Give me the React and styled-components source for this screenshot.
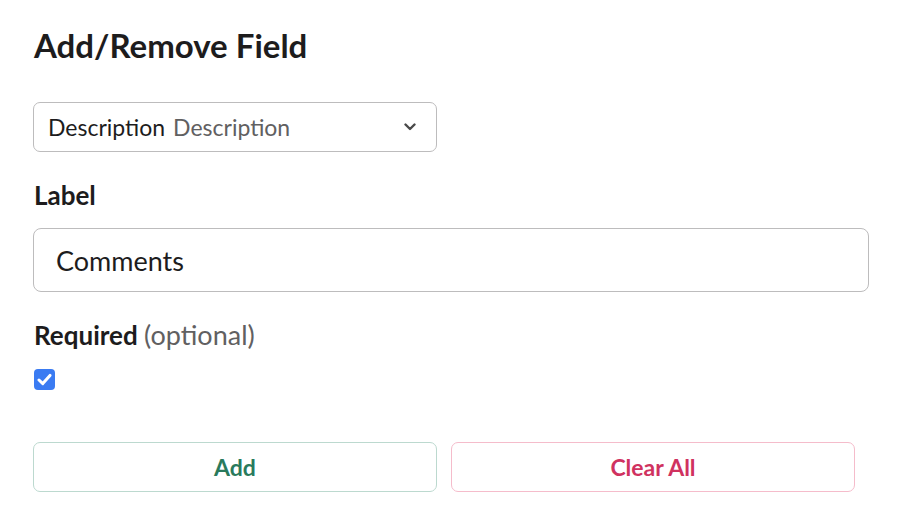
import React from "react";
import styled, { createGlobalStyle } from "styled-components";

const Global = createGlobalStyle`
  html, body { margin: 0; padding: 0; background: #ffffff; }
  body { font-family: Lato, "Noto Sans", sans-serif; color: #1d1c1d; -webkit-font-smoothing: antialiased; }
`;

const Page = styled.div`
  display: flex;
  flex-direction: column;
  align-items: flex-start;
  padding: 24px 33px 0 33px;
  width: 836px;
`;

const Title = styled.h1`
  margin: 0 0 36px 1px;
  font-size: 33px;
  line-height: 42px;
  font-weight: 700;
  color: #1d1c1d;
`;

const Select = styled.div`
  box-sizing: border-box;
  width: 404px;
  height: 50px;
  border: 1px solid #bdbcbd;
  border-radius: 7px;
  display: flex;
  align-items: center;
  padding: 0 20px 0 14px;
  font-size: 23px;
`;

const SelectMain = styled.span`
  color: #1d1c1d;
`;

const SelectHint = styled.span`
  color: #616061;
  margin-left: 8px;
  flex: 1;
`;

const FieldLabel = styled.div`
  margin: 28px 0 0 1px;
  font-size: 26px;
  line-height: 30px;
  font-weight: 700;
  color: #1d1c1d;
`;

const Optional = styled.span`
  font-weight: 400;
  font-size: 27px;
  color: #616061;
`;

const TextInput = styled.div`
  box-sizing: border-box;
  margin-top: 18px;
  width: 836px;
  height: 64px;
  border: 1px solid #bdbcbd;
  border-radius: 8px;
  display: flex;
  align-items: center;
  padding: 0 22px;
  font-size: 27px;
  color: #1d1c1d;
`;

const Check = styled.div`
  margin: 19px 0 0 1px;
  width: 21px;
  height: 21px;
  border-radius: 4px;
  background: #3a7bf2;
  display: flex;
  align-items: center;
  justify-content: center;
`;

const Buttons = styled.div`
  margin-top: 52px;
  display: flex;
  gap: 14px;
`;

const Button = styled.button`
  box-sizing: border-box;
  width: 404px;
  height: 50px;
  background: #ffffff;
  border: 1px solid ${(p) => p.$border};
  border-radius: 7px;
  font-family: Lato, "Noto Sans", sans-serif;
  font-size: 23px;
  font-weight: 700;
  color: ${(p) => p.$color};
  display: flex;
  align-items: center;
  justify-content: center;
  padding: 0;
`;

export default function App() {
  return (
    <>
      <Global />
      <Page>
        <Title>Add/Remove Field</Title>
        <Select>
          <SelectMain>Description</SelectMain>
          <SelectHint>Description</SelectHint>
          <svg width="12" height="8" viewBox="0 0 12 8">
            <path d="M1.5 1.5 L6 6 L10.5 1.5" fill="none" stroke="#4a4a4a" strokeWidth="2.4" strokeLinecap="round" strokeLinejoin="round" />
          </svg>
        </Select>
        <FieldLabel>Label</FieldLabel>
        <TextInput>Comments</TextInput>
        <FieldLabel>
          Required <Optional>(optional)</Optional>
        </FieldLabel>
        <Check>
          <svg width="15" height="13" viewBox="0 0 15 13">
            <path d="M2 7 L5.8 10.6 L13 2.4" fill="none" stroke="#fff" strokeWidth="3" strokeLinecap="round" strokeLinejoin="round" />
          </svg>
        </Check>
        <Buttons>
          <Button $border="#bcd9cf" $color="#2a7a5c">Add</Button>
          <Button $border="#f5bccb" $color="#d0325f">Clear All</Button>
        </Buttons>
      </Page>
    </>
  );
}
